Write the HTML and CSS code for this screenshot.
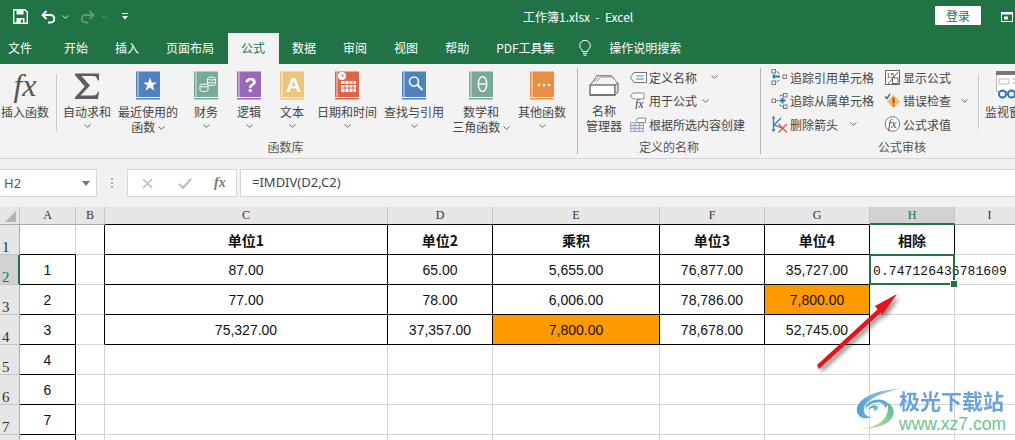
FILE: index.html
```html
<!DOCTYPE html>
<html lang="zh-CN">
<head>
<meta charset="utf-8">
<title>工作簿1.xlsx - Excel</title>
<link rel="stylesheet" href="styles.css">
</head>
<body>
<svg class="defs" width="0" height="0">
  <symbol id="book" viewBox="0 0 24 28">
    <rect x="0" y="0" width="24" height="25.5" fill="currentColor"/>
    <rect x="1.5" y="0" width="1" height="25.5" fill="#fff" opacity=".75"/>
    <rect x="0" y="25.5" width="24" height="1" fill="#fff"/>
    <rect x="0" y="26.5" width="24" height="1.5" fill="currentColor"/>
  </symbol>
  <symbol id="chev" viewBox="0 0 7 4">
    <path d="M.5.5 3.5 3.3 6.5.5" fill="none" stroke="#666" stroke-width="1"/>
  </symbol>
</svg>

<header class="titlebar">
  <svg class="qat-save" width="15" height="15" viewBox="0 0 15 15"><path d="M.7.7h11.2l2.4 2.4v11.2H.7z" fill="none" stroke="#fff" stroke-width="1.4"/><path d="M3.5 1h7v4.5h-7zM3.5 9h8v5.5h-8z" fill="#fff"/><rect x="7.8" y="10.5" width="2" height="3.4" fill="#217346"/></svg>
  <svg class="qat-undo" width="15" height="14" viewBox="0 0 15 14"><path d="M5.5 1 1.5 5l4 4" fill="none" stroke="#fff" stroke-width="1.8"/><path d="M2 5h7.5c5 0 5 7.5 0 7.500H7" fill="none" stroke="#fff" stroke-width="1.8"/></svg>
  <svg class="qat-c1" width="7" height="4" viewBox="0 0 7 4"><path d="M.5.5 3.5 3.3 6.5.5" fill="none" stroke="#d5e5dc"/></svg>
  <svg class="qat-redo" width="15" height="14" viewBox="0 0 15 14"><path d="M9.500 1l4 4-4 4" fill="none" stroke="#5d9c7c" stroke-width="1.8"/><path d="M13 5H5.500c-5 0-5 7.500 0 7.500H8" fill="none" stroke="#5d9c7c" stroke-width="1.8"/></svg>
  <svg class="qat-c2" width="7" height="4" viewBox="0 0 7 4"><path d="M.5.5 3.5 3.3 6.5.5" fill="none" stroke="#5d9c7c"/></svg>
  <svg class="qat-more" width="7" height="7" viewBox="0 0 7 7"><rect y="0" width="6" height="1" fill="#fff"/><path d="M0 3h6L3 6.500z" fill="#fff"/></svg>
  <span class="doc-title">工作簿1.xlsx  -  Excel</span>
  <button class="login">登录</button>
  <svg class="win-icon" width="12" height="12" viewBox="0 0 12 12"><rect x=".5" y="1.500" width="11" height="9" fill="none" stroke="#fff"/><rect x=".5" y="1.500" width="11" height="2" fill="#fff"/><rect x="3" y="5.500" width="4" height="3" fill="#fff"/></svg>
</header>

<nav class="tabs">
  <span class="tab tab-first">文件</span>
  <span class="tab">开始</span>
  <span class="tab">插入</span>
  <span class="tab">页面布局</span>
  <span class="tab tab-active">公式</span>
  <span class="tab">数据</span>
  <span class="tab">审阅</span>
  <span class="tab">视图</span>
  <span class="tab">帮助</span>
  <span class="tab">PDF工具集</span>
  <svg class="lamp" width="12" height="17" viewBox="0 0 12 17"><path d="M3.500 11.500C3 9 .7 8.500.7 5.600a5.300 5.300 0 0 1 10.600 0c0 2.900-2.300 3.400-2.800 5.900z" fill="none" stroke="#fff"/><path d="M3.800 13.300h4.400M4.500 15.300h3" stroke="#fff"/></svg>
  <span class="search">操作说明搜索</span>
</nav>

<section class="ribbon">
  <div class="group g-insert">
    <div class="big b-insert"><span class="fx-big">fx</span><span class="lbl">插入函数</span></div>
  </div>
  <div class="group g-lib">
    <div class="group-row">
      <div class="big b-w55">
        <svg class="ic" width="26" height="28" viewBox="0 0 26 28"><path d="M1 2h24v7l-1.500-.2C23 6 22 4.500 18 4.500H7.500l8.500 9.500-9.500 10H19c3 0 4.300-1.500 5-4l1 .2-1 7.300H1v-1.800L10.800 15 1 3.800z" fill="#5d5d5d"/></svg>
        <span class="lbl">自动求和</span><svg class="cv" width="7" height="4"><use href="#chev"/></svg>
      </div>
      <div class="big b-w67 b-recent">
        <svg class="ic bk-blue" width="24" height="28"><use href="#book"/><path d="M14 6.500l1.800 5h5.200l-4.200 3.100 1.600 5.100-4.400-3.100-4.400 3.100 1.600-5.100L7 11.500h5.200z" fill="#fff"/></svg>
        <span class="lbl">最近使用的</span><span class="lbl">函数 <svg class="cvi" width="7" height="4"><use href="#chev"/></svg></span>
      </div>
      <div class="big b-w43">
        <svg class="ic bk-green" width="24" height="28"><use href="#book"/><g fill="none" stroke="#fff" stroke-width="1"><ellipse cx="17.500" cy="7.500" rx="4" ry="1.500"/><path d="M13.500 8v5c0 2 8 2 8 0V8M13.500 10.500c0 2 8 2 8 0"/><ellipse cx="10" cy="14.500" rx="4" ry="1.500"/><path d="M6 15v4c0 2 8 2 8 0v-4"/></g></svg>
        <span class="lbl">财务</span><svg class="cv" width="7" height="4"><use href="#chev"/></svg>
      </div>
      <div class="big b-w43">
        <svg class="ic bk-purple" width="24" height="28"><use href="#book"/><text x="13.500" y="21" class="glyph glyph-q">?</text></svg>
        <span class="lbl">逻辑</span><svg class="cv" width="7" height="4"><use href="#chev"/></svg>
      </div>
      <div class="big b-w43">
        <svg class="ic bk-yellow" width="24" height="28"><use href="#book"/><text x="13.500" y="21" class="glyph glyph-a">A</text></svg>
        <span class="lbl">文本</span><svg class="cv" width="7" height="4"><use href="#chev"/></svg>
      </div>
      <div class="big b-w67">
        <svg class="ic bk-red" width="24" height="28"><use href="#book"/><circle cx="7" cy="5" r="4" fill="#fff"/><path d="M7 2.800V5h2" fill="none" stroke="#dc6545"/><path d="M6 10h15v11H6z" fill="#fff"/><path d="M6 13.500h15M6 17h15M10 10v11M14 10v11M18 10v11" stroke="#dc6545"/></svg>
        <span class="lbl">日期和时间</span><svg class="cv" width="7" height="4"><use href="#chev"/></svg>
      </div>
      <div class="big b-w67">
        <svg class="ic bk-blue" width="24" height="28"><use href="#book"/><circle cx="12" cy="10.500" r="4.500" fill="none" stroke="#fff" stroke-width="1.600"/><path d="M15.500 14l5 5" stroke="#fff" stroke-width="2"/></svg>
        <span class="lbl">查找与引用</span><svg class="cv" width="7" height="4"><use href="#chev"/></svg>
      </div>
      <div class="big b-w67">
        <svg class="ic bk-green" width="24" height="28"><use href="#book"/><ellipse cx="13.500" cy="13" rx="4.200" ry="7.500" fill="none" stroke="#fff" stroke-width="1.400"/><path d="M9.500 13h8" stroke="#fff" stroke-width="1.400"/></svg>
        <span class="lbl">数学和</span><span class="lbl">三角函数 <svg class="cvi" width="7" height="4"><use href="#chev"/></svg></span>
      </div>
      <div class="big b-w55">
        <svg class="ic bk-orange" width="24" height="28"><use href="#book"/><circle cx="9" cy="14" r="1.300" fill="#fff"/><circle cx="14" cy="14" r="1.300" fill="#fff"/><circle cx="19" cy="14" r="1.300" fill="#fff"/></svg>
        <span class="lbl">其他函数</span><svg class="cv" width="7" height="4"><use href="#chev"/></svg>
      </div>
    </div>
    <div class="group-name name-lib">函数库</div>
  </div>
  <div class="group g-names">
    <div class="group-row">
      <div class="big b-names">
        <svg class="ic ic-names" width="30" height="24" viewBox="0 0 30 24"><path d="M1 12.500 8 2.500h14l7 8" fill="none" stroke="#777"/><path d="M5 9l5-6h13l4 5M8 8l4-4h12" fill="none" stroke="#999"/><rect x="1" y="12" width="25" height="10" fill="#fff" stroke="#666" stroke-width="1.300"/><path d="M26 12l3-2v9l-3 3z" fill="#ddd" stroke="#666"/><rect x="1" y="21" width="25" height="2" fill="#777"/></svg>
        <span class="lbl">名称</span><span class="lbl">管理器</span>
      </div>
      <div class="small-col">
        <div class="sm"><svg width="17" height="11" viewBox="0 0 17 11"><path d="M4 .5h12.500v10H4L.5 5.500z" fill="#fff" stroke="#777"/><path d="M6 4h8" stroke="#4f81bd"/><path d="M6 7h8" stroke="#4f81bd"/></svg><span>定义名称</span><svg class="cv-s cv-14" width="7" height="4"><use href="#chev"/></svg></div>
        <div class="sm"><svg width="17" height="17" viewBox="0 0 17 17"><path d="M3 1h11v6H3L.5 4z" fill="#fff" stroke="#888"/><text x="5" y="15.500" class="glyph-fx">fx</text></svg><span>用于公式</span><svg class="cv-s cv-8" width="7" height="4"><use href="#chev"/></svg></div>
        <div class="sm"><svg width="17" height="15" viewBox="0 0 17 15"><rect x=".5" y="5.500" width="13" height="9" fill="#dce6f1" stroke="#aab"/><path d="M.5 8.500h13M.5 11.500h13M5 5.500v9M9.500 5.500v9" stroke="#9ab"/><path d="M8 1h7.500v4.500H8L6 3.200z" fill="#fff" stroke="#888"/></svg><span>根据所选内容创建</span></div>
      </div>
    </div>
    <div class="group-name">定义的名称</div>
  </div>
  <div class="group g-audit">
    <div class="group-row audit-row">
      <div class="small-col col-trace">
        <div class="sm"><svg width="16" height="16" viewBox="0 0 16 16"><g fill="#fff" stroke="#777"><rect x=".5" y=".5" width="3.500" height="3.500"/><rect x=".5" y="12" width="3.500" height="3.500"/><rect x="11.500" y="6" width="3.500" height="3.500"/></g><path d="M3.500 7.500h5M1 7.500h1M2.500 5.500v4" stroke="#2f75b5" stroke-width="1.800"/><path d="M5 2.500l3 2M5 13l3-2" stroke="#2f75b5"/></svg><span>追踪引用单元格</span></div>
        <div class="sm"><svg width="16" height="16" viewBox="0 0 16 16"><g fill="#fff" stroke="#777"><rect x="12" y=".5" width="3.500" height="3.500"/><rect x="12" y="12" width="3.500" height="3.500"/><rect x=".5" y="6" width="3.500" height="3.500"/></g><path d="M8 7.500h6M11 4.500v6" stroke="#2f75b5" stroke-width="1.800"/><path d="M5 7.500h2M8 3l3-1M8 12l3 1.500" stroke="#2f75b5"/></svg><span>追踪从属单元格</span></div>
        <div class="sm"><svg width="17" height="17" viewBox="0 0 17 17"><path d="M2.500 1v14M10 2 3 9l8 3" fill="none" stroke="#2f75b5" stroke-width="1.300"/><path d="M1 2.500 2.500.5 4 2.500M1 13l1.500 2.500L4 13" fill="none" stroke="#2f75b5"/><path d="M7.500 8l8.500 8.500M16 8l-8.500 8.500" stroke="#e0603a" stroke-width="1.500"/></svg><span>删除箭头</span><svg class="cv-s cv-12" width="7" height="4"><use href="#chev"/></svg></div>
      </div>
      <div class="small-col col-check">
        <div class="sm"><svg width="15" height="15" viewBox="0 0 15 15"><rect x=".5" y=".5" width="14" height="14" fill="#fff" stroke="#666"/><text x="1.500" y="7.500" class="glyph-15">15</text><path d="M13 2 3 14" stroke="#666"/><rect x="7.500" y="8" width="5.500" height="5.500" fill="none" stroke="#666"/></svg><span>显示公式</span></div>
        <div class="sm"><svg width="17" height="15" viewBox="0 0 17 15"><path d="M1 3.500 3 5.500 6 1" fill="none" stroke="#2f75b5" stroke-width="1.500"/><path d="M9.500 2 16 8.500 9.500 15 3 8.500z" fill="#f0c060"/><path d="M9.500 4.500v6" stroke="#d23b20" stroke-width="2"/><circle cx="9.500" cy="12.500" r="1.100" fill="#d23b20"/></svg><span>错误检查</span><svg class="cv-s cv-10" width="7" height="4"><use href="#chev"/></svg></div>
        <div class="sm"><svg width="16" height="16" viewBox="0 0 16 16"><circle cx="8" cy="8" r="7.300" fill="#fff" stroke="#777"/><text x="3.500" y="11.500" class="glyph-fx">fx</text></svg><span>公式求值</span></div>
      </div>
      <div class="vr"></div>
      <div class="big b-watch">
        <svg class="ic" width="30" height="29" viewBox="0 0 30 29"><rect x=".5" y=".5" width="29" height="20" fill="#fff" stroke="#bbb"/><rect y="0" width="30" height="4" fill="#777"/><path d="M3 8h10v5H3zM16 8h11M16 12h11" fill="none" stroke="#bbb"/><g fill="none" stroke="#2f75b5" stroke-width="2"><circle cx="6.500" cy="23" r="3.500"/><circle cx="15.500" cy="23" r="3.500"/></g></svg>
        <span class="lbl">监视窗口</span>
      </div>
    </div>
    <div class="group-name name-audit">公式审核</div>
  </div>
</section>

<section class="fbar">
  <div class="namebox"><span>H2</span><i class="tri"></i></div>
  <div class="dots"><i></i><i></i><i></i></div>
  <div class="fbtns">
    <svg width="11" height="11" viewBox="0 0 11 11"><path d="M1 1l9 9M10 1l-9 9" stroke="#bdbdbd" stroke-width="1.600"/></svg>
    <svg width="14" height="11" viewBox="0 0 14 11"><path d="M1 6l4 4 8-9" fill="none" stroke="#bdbdbd" stroke-width="2"/></svg>
    <span class="fbtn-fx">fx</span>
  </div>
  <div class="finput">=IMDIV(D2,C2)</div>
</section>

<main class="sheet">
  <div class="grid">
    <div class="hc corner"><i></i></div><div class="hc">A</div><div class="hc">B</div><div class="hc bb">C</div><div class="hc bb">D</div><div class="hc bb">E</div><div class="hc bb">F</div><div class="hc bb">G</div><div class="hc hc-sel">H</div><div class="hc">I</div>

    <div class="rh">1</div><div class="c bb"></div><div class="c br"></div><div class="c bb br th">单位1</div><div class="c bb br th">单位2</div><div class="c bb br th">乘积</div><div class="c bb br th">单位3</div><div class="c bb br th">单位4</div><div class="c bb br th">相除</div><div class="c"></div>

    <div class="rh rh-sel">2</div><div class="c bb br">1</div><div class="c br"></div><div class="c bb br">87.00</div><div class="c bb br">65.00</div><div class="c bb br">5,655.00</div><div class="c bb br">76,877.00</div><div class="c bb br">35,727.00</div><div class="c sel"><span class="mono">0.747126436781609</span><i class="handle"></i></div><div class="c"></div>

    <div class="rh">3</div><div class="c bb br">2</div><div class="c br"></div><div class="c bb br">77.00</div><div class="c bb br">78.00</div><div class="c bb br">6,006.00</div><div class="c bb br">78,786.00</div><div class="c bb br hl">7,800.00</div><div class="c"></div><div class="c"></div>

    <div class="rh">4</div><div class="c bb br">3</div><div class="c br"></div><div class="c bb br">75,327.00</div><div class="c bb br">37,357.00</div><div class="c bb br hl">7,800.00</div><div class="c bb br">78,678.00</div><div class="c bb br">52,745.00</div><div class="c"></div><div class="c"></div>

    <div class="rh">5</div><div class="c bb br">4</div><div class="c"></div><div class="c"></div><div class="c"></div><div class="c"></div><div class="c"></div><div class="c"></div><div class="c"></div><div class="c"></div>
    <div class="rh">6</div><div class="c bb br">6</div><div class="c"></div><div class="c"></div><div class="c"></div><div class="c"></div><div class="c"></div><div class="c"></div><div class="c"></div><div class="c"></div>
    <div class="rh">7</div><div class="c bb br">7</div><div class="c"></div><div class="c"></div><div class="c"></div><div class="c"></div><div class="c"></div><div class="c"></div><div class="c"></div><div class="c"></div>
    <div class="rh"></div><div class="c bb br"></div><div class="c"></div><div class="c"></div><div class="c"></div><div class="c"></div><div class="c"></div><div class="c"></div><div class="c"></div><div class="c"></div>
  </div>

  <svg class="arrow" width="100" height="90" viewBox="0 0 100 90"><path d="M82 6 60 18l2.500 3.500L2 77l2 4 62-56.500L67 27z" fill="#e5131a"/></svg>

  <div class="mark">
    <svg class="mark-logo" width="46" height="42" viewBox="0 0 46 42">
      <defs>
        <linearGradient id="sw1" x1="0" y1="0" x2="1" y2="0"><stop offset="0" stop-color="#4f9fd8"/><stop offset="1" stop-color="#a9d4ee"/></linearGradient>
        <linearGradient id="sw2" x1="0" y1="1" x2="1" y2="0"><stop offset="0" stop-color="#f0e68c"/><stop offset=".5" stop-color="#8fd0a0"/><stop offset="1" stop-color="#55bb77"/></linearGradient>
      </defs>
      <path d="M2 24C0 12 18 2 44 1 28 5 12 10 9 20c-1 6 3 9 8 9-7 3-13 1-15-5z" fill="url(#sw1)"/>
      <path d="M10 21c1-8 12-12 20-8 4 2 2 6 0 7 0-4-5-7-11-5-5 1-7 4-9 6z" fill="#5ba6d6"/>
      <path d="M13 22c1-4 6-6 9-4 2 2 0 5-3 5 1-2 0-3-2-3-1 0-3 1-4 2z" fill="#6cb7a6"/>
      <path d="M4 40c14 0 22-4 27-12 2-4 3-9 0-14 6 2 9 8 7 14-3 8-16 14-34 12z" fill="url(#sw2)"/>
    </svg>
    <div class="mark-text">
      <span class="mark-cn">极光下载站</span>
      <span class="mark-url">www.xz7.com</span>
    </div>
  </div>
</main>
</body>
</html>
```
FILE: styles.css
```css
* { box-sizing: border-box; }
html, body { margin: 0; padding: 0; }
body {
  width: 1015px;
  height: 440px;
  overflow: hidden;
  position: relative;
  background: #fff;
  font-family: "Noto Sans CJK SC", "Noto Sans", sans-serif;
  font-size: 12px;
  color: #444;
}
.defs { position: absolute; }

/* Title bar */
.titlebar {
  height: 33px;
  background: #217346;
  display: flex;
  align-items: center;
  color: #fff;
}
.qat-save { margin-left: 13px; }
.qat-undo { margin-left: 13px; }
.qat-c1 { margin-left: 6px; }
.qat-redo { margin-left: 11px; }
.qat-c2 { margin-left: 6px; }
.qat-more { margin-left: 14px; }
.doc-title { margin: 0 0 1px 394px; white-space: pre; width: 118px; }
.login {
  margin: 0 0 3px 294px;
  width: 46px;
  height: 19px;
  padding: 0;
  border: 0;
  border-radius: 1px;
  background: #fff;
  color: #217346;
  font: 12px "Noto Sans CJK SC", sans-serif;
}
.win-icon { margin-left: 20px; }

/* Tabs */
.tabs {
  height: 31px;
  background: #217346;
  display: flex;
  align-items: stretch;
  color: #fff;
  white-space: nowrap;
}
.tab {
  padding: 0 13.5px 2px;
  display: flex;
  align-items: center;
}
.tab-first { margin-left: -5.5px; margin-right: 5px; }
.tab-active { background: #f3f3f3; color: #217346; }
.lamp { align-self: center; margin-left: 11px; }
.search { align-self: center; margin: 0 0 2px 18px; }

/* Ribbon */
.ribbon {
  height: 95px;
  background: #f3f3f3;
  border-bottom: 1px solid #d4d4d4;
  display: flex;
  overflow: hidden;
  padding-top: 4px;
  position: relative;
}
.group { display: flex; flex-direction: column; position: relative; height: 86px; flex: none; }
.group-row { display: flex; height: 71px; }
.group-name { text-align: center; line-height: 15px; margin-top: 4px; color: #555; }
.name-lib { width: 452px; }
.g-insert { width: 57px; border-right: 1px solid #c9c9c9; height: 57px; margin-top: 6px; }
.g-insert .big { width: 50px; margin-top: -6px; }
.g-lib { width: 520px; padding-left: 2.5px; }
.g-names { width: 183px; border-left: 1px solid #b5b5b5; }
.g-audit { width: 282px; border-left: 1px solid #b5b5b5; }
.audit-row { padding-left: 10px; }
.name-audit { width: 282px; }

.big {
  display: flex;
  flex-direction: column;
  align-items: center;
  padding-top: 3px;
  flex: none;
  white-space: nowrap;
}
.big .ic { height: 29px; margin-bottom: 4px; flex: none; }
.lbl { line-height: 15px; height: 15px; color: #444; }
.cv { margin-top: 5px; }
.cvi { vertical-align: 2px; }
.b-insert .lbl { margin-top: 4px; }
.fx-big {
  font: italic 32px/29px "Liberation Serif", serif;
  color: #555;
  height: 29px;
}
.b-w43 { width: 43px; }
.b-w55 { width: 55px; }
.b-w67 { width: 67px; }
.b-recent { margin-right: 3px; }
.b-names { width: 52px; padding-top: 5px; }
.ic-names { height: 24px !important; margin-bottom: 6px !important; }
.bk-blue { color: #4f81bd; }
.bk-green { color: #79a998; }
.bk-purple { color: #9966b8; }
.bk-yellow { color: #edc47c; }
.bk-red { color: #dc6545; }
.bk-orange { color: #e78f46; }
.glyph { font-family: "Liberation Sans", sans-serif; font-weight: 700; fill: #fff; text-anchor: middle; }
.glyph-q { font-size: 20px; }
.glyph-a { font-size: 21px; }
.glyph-fx { font: italic 12px "Liberation Serif", serif; fill: #444; }
.glyph-15 { font: 7px "Liberation Sans", sans-serif; fill: #444; }

.small-col {
  display: flex;
  flex-direction: column;
  height: 67px;
  margin-top: -1px;
  justify-content: space-between;
}
.sm {
  display: flex;
  align-items: center;
  height: 20px;
  white-space: nowrap;
  color: #444;
  position: relative;
}
.sm > svg:first-child { width: 17px; flex: none; margin-right: 2px; }
.sm .cv-s { margin-left: 14px; }
.sm .cv-s.cv-8 { margin-left: 5px; }
.sm .cv-s.cv-10 { margin-left: 10px; }
.sm .cv-s.cv-12 { margin-left: 12px; }
.col-trace { width: 113px; }
.col-check { width: 94px; }
.vr { width: 1px; height: 55px; background: #c9c9c9; margin: 6px 6px 0 0; flex: none; }
.b-watch { width: 42px; align-items: flex-start; }
.b-watch .ic { margin-left: 11px; }

/* Formula bar */
.fbar {
  height: 48px;
  background: #f1f1f1;
  display: flex;
  align-items: center;
}
.namebox {
  width: 98px;
  height: 28px;
  margin-left: -1px;
  background: #fff;
  border: 1px solid #d6d6d6;
  display: flex;
  align-items: center;
  justify-content: space-between;
  padding: 0 6px 0 4px;
  font: 13px "Noto Sans", sans-serif;
  color: #555;
}
.tri { width: 0; height: 0; border: 4px solid transparent; border-top: 5px solid #777; border-bottom: 0; }
.dots { width: 30px; display: flex; flex-direction: column; align-items: center; gap: 2px; }
.dots i { width: 2px; height: 2px; background: #aaa; }
.fbtns {
  width: 110px;
  height: 28px;
  background: #fff;
  border: 1px solid #d6d6d6;
  display: flex;
  align-items: center;
  padding-left: 14px;
  gap: 25px;
}
.fbtn-fx { font: italic 700 14px "Liberation Serif", serif; color: #777; margin-left: -3px; }
.finput {
  flex: 1;
  margin-left: 3px;
  height: 28px;
  background: #fff;
  border: 1px solid #d6d6d6;
  border-right: 0;
  padding-left: 11px;
  font: 13px/24px "Noto Sans", sans-serif;
  color: #444;
}

/* Sheet */
.sheet { height: 233px; position: relative; overflow: hidden; }
.grid {
  display: grid;
  grid-template-columns: 20px 56px 29px 283px 105px 167px 105px 105px 85px 70px;
  grid-template-rows: 18px repeat(8, 30px);
  color: #111;
}
.hc {
  background: #e6e6e6;
  border-right: 1px solid #c4c4c4;
  border-bottom: 1px solid #a8a8a8;
  display: flex;
  align-items: center;
  justify-content: center;
  font: 12px/17px "Liberation Serif", serif;
  color: #333;
}
.hc.bb { border-bottom-color: #000; }
.hc-sel { background: #d2d2d2; color: #217346; border-bottom: 2px solid #217346; }
.corner { position: relative; }
.corner i {
  position: absolute;
  right: 3px;
  bottom: 2px;
  width: 0;
  height: 0;
  border-left: 11px solid transparent;
  border-bottom: 11px solid #b4b4b4;
}
.rh {
  background: #e6e6e6;
  border-right: 1px solid #a8a8a8;
  border-bottom: 1px solid #c4c4c4;
  padding-left: 2px;
  display: flex;
  align-items: flex-end;
  font: 15px/14px "Liberation Serif", serif;
  color: #333;
}
.rh-sel { background: #d2d2d2; color: #217346; border-right: 2px solid #217346; }
.c {
  border-right: 1px solid #d4d4d4;
  border-bottom: 1px solid #d4d4d4;
  display: flex;
  align-items: center;
  justify-content: center;
  font: 14px "Liberation Sans", sans-serif;
  white-space: nowrap;
  min-width: 0;
  position: relative;
}
.bb { border-bottom-color: #000; }
.br { border-right-color: #000; }
.th { font: 700 14px "Noto Sans CJK SC", sans-serif; }
.hl { background: #ff9900; }
.sel { justify-content: flex-start; overflow: visible; }
.sel::before {
  content: "";
  position: absolute;
  left: -1px;
  top: -1px;
  right: -1px;
  bottom: -1px;
  border: 2px solid #217346;
  z-index: 2;
}
.mono { font: 13px "Liberation Mono", monospace; padding: 3px 0 0 3px; letter-spacing: .08px; position: relative; z-index: 1; }
.handle {
  position: absolute;
  right: -4px;
  bottom: -4px;
  width: 6px;
  height: 6px;
  background: #217346;
  border: 1px solid #fff;
  box-sizing: content-box;
  z-index: 3;
}

/* Overlays */
.arrow {
  position: absolute;
  left: 815px;
  top: 81px;
  filter: drop-shadow(3px 3px 2px rgba(0,0,0,.45));
  z-index: 4;
}
.mark {
  position: absolute;
  left: 855px;
  top: 181px;
  display: flex;
  z-index: 4;
}
.mark-text { display: flex; flex-direction: column; margin-left: -2px; }
.mark-cn {
  font: 700 21px/24px "Noto Sans CJK SC", sans-serif;
  color: #5b9bd5;
  opacity: .9;
}
.mark-url {
  font: 17.5px/16px "Liberation Sans", sans-serif;
  color: #6dc48a;
  margin-top: 4px;
}
```
